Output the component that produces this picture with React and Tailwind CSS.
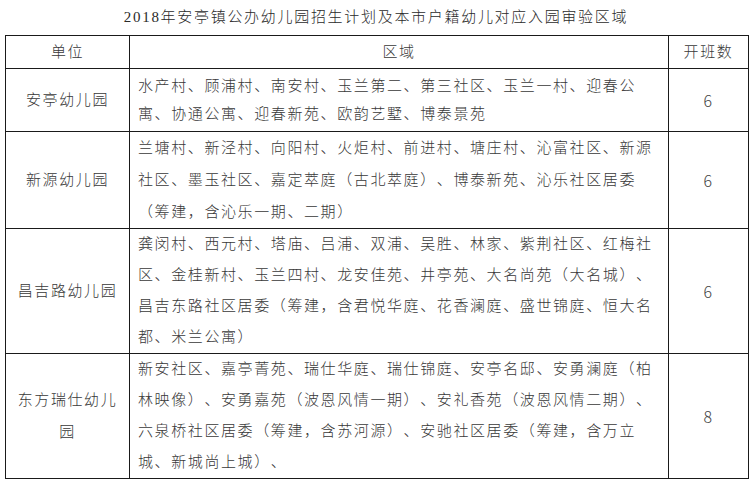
import React from 'react';

const rows = [
  {
    unit: ['安亭幼儿园'],
    area: [
      '水产村、顾浦村、南安村、玉兰第二、第三社区、玉兰一村、迎春公',
      '寓、协通公寓、迎春新苑、欧韵艺墅、博泰景苑',
    ],
    count: '6',
    h: 'h-[63px]',
    lh: 'leading-[28px]',
  },
  {
    unit: ['新源幼儿园'],
    area: [
      '兰塘村、新泾村、向阳村、火炬村、前进村、塘庄村、沁富社区、新源',
      '社区、墨玉社区、嘉定萃庭（古北萃庭）、博泰新苑、沁乐社区居委',
      '（筹建，含沁乐一期、二期）',
    ],
    count: '6',
    h: 'h-[96px]',
    lh: 'leading-[32px]',
  },
  {
    unit: ['昌吉路幼儿园'],
    area: [
      '龚闵村、西元村、塔庙、吕浦、双浦、吴胜、林家、紫荆社区、红梅社',
      '区、金桂新村、玉兰四村、龙安佳苑、井亭苑、大名尚苑（大名城）、',
      '昌吉东路社区居委（筹建，含君悦华庭、花香澜庭、盛世锦庭、恒大名',
      '都、米兰公寓）',
    ],
    count: '6',
    h: 'h-[125px]',
    lh: 'leading-[31px]',
  },
  {
    unit: ['东方瑞仕幼儿', '园'],
    area: [
      '新安社区、嘉亭菁苑、瑞仕华庭、瑞仕锦庭、安亭名邸、安勇澜庭（柏',
      '林映像）、安勇嘉苑（波恩风情一期）、安礼香苑（波恩风情二期）、',
      '六泉桥社区居委（筹建，含苏河源）、安驰社区居委（筹建，含万立',
      '城、新城尚上城）、',
    ],
    count: '8',
    h: 'h-[125px]',
    lh: 'leading-[31px]',
  },
];

const cell = 'border border-[#1a1a1a] align-middle p-0';

export default function App() {
  return (
    <div className="w-[752px] h-[480px] overflow-hidden bg-white font-['Liberation_Serif','Noto_Sans_CJK_SC',serif] font-light text-[#383838] [text-spacing-trim:space-all]">
      {/* Title */}
      <div className="h-[35px] flex items-center justify-center text-[15px] tracking-[1.7px] text-[#2a2a2a] pb-[1px]">
        2018年安亭镇公办幼儿园招生计划及本市户籍幼儿对应入园审验区域
      </div>

      <table className="ml-[5px] w-[743px] border-collapse table-fixed text-[15px] tracking-[1.6px]">
        <colgroup>
          <col className="w-[124px]" />
          <col className="w-[539px]" />
          <col className="w-[80px]" />
        </colgroup>
        <thead>
          <tr className="h-[33px]">
            <th className={`${cell} font-light text-center`}>单位</th>
            <th className={`${cell} font-light text-center`}>区域</th>
            <th className={`${cell} font-light text-center`}>开班数</th>
          </tr>
        </thead>
        <tbody>
          {rows.map((r, i) => (
            <tr key={i} className={r.h}>
              <td className={`${cell} text-center leading-[32px]`}>
                {r.unit.map((u, j) => (
                  <div key={j}>{u}</div>
                ))}
              </td>
              <td className={`${cell} pl-[8px] whitespace-nowrap ${r.lh}`}>
                {r.area.map((line, j) => (
                  <div key={j}>{line}</div>
                ))}
              </td>
              <td className={`${cell} text-center font-['Noto_Sans_CJK_SC',sans-serif] font-light text-[16px] text-[#444]`}>
                {r.count}
              </td>
            </tr>
          ))}
        </tbody>
      </table>
    </div>
  );
}
